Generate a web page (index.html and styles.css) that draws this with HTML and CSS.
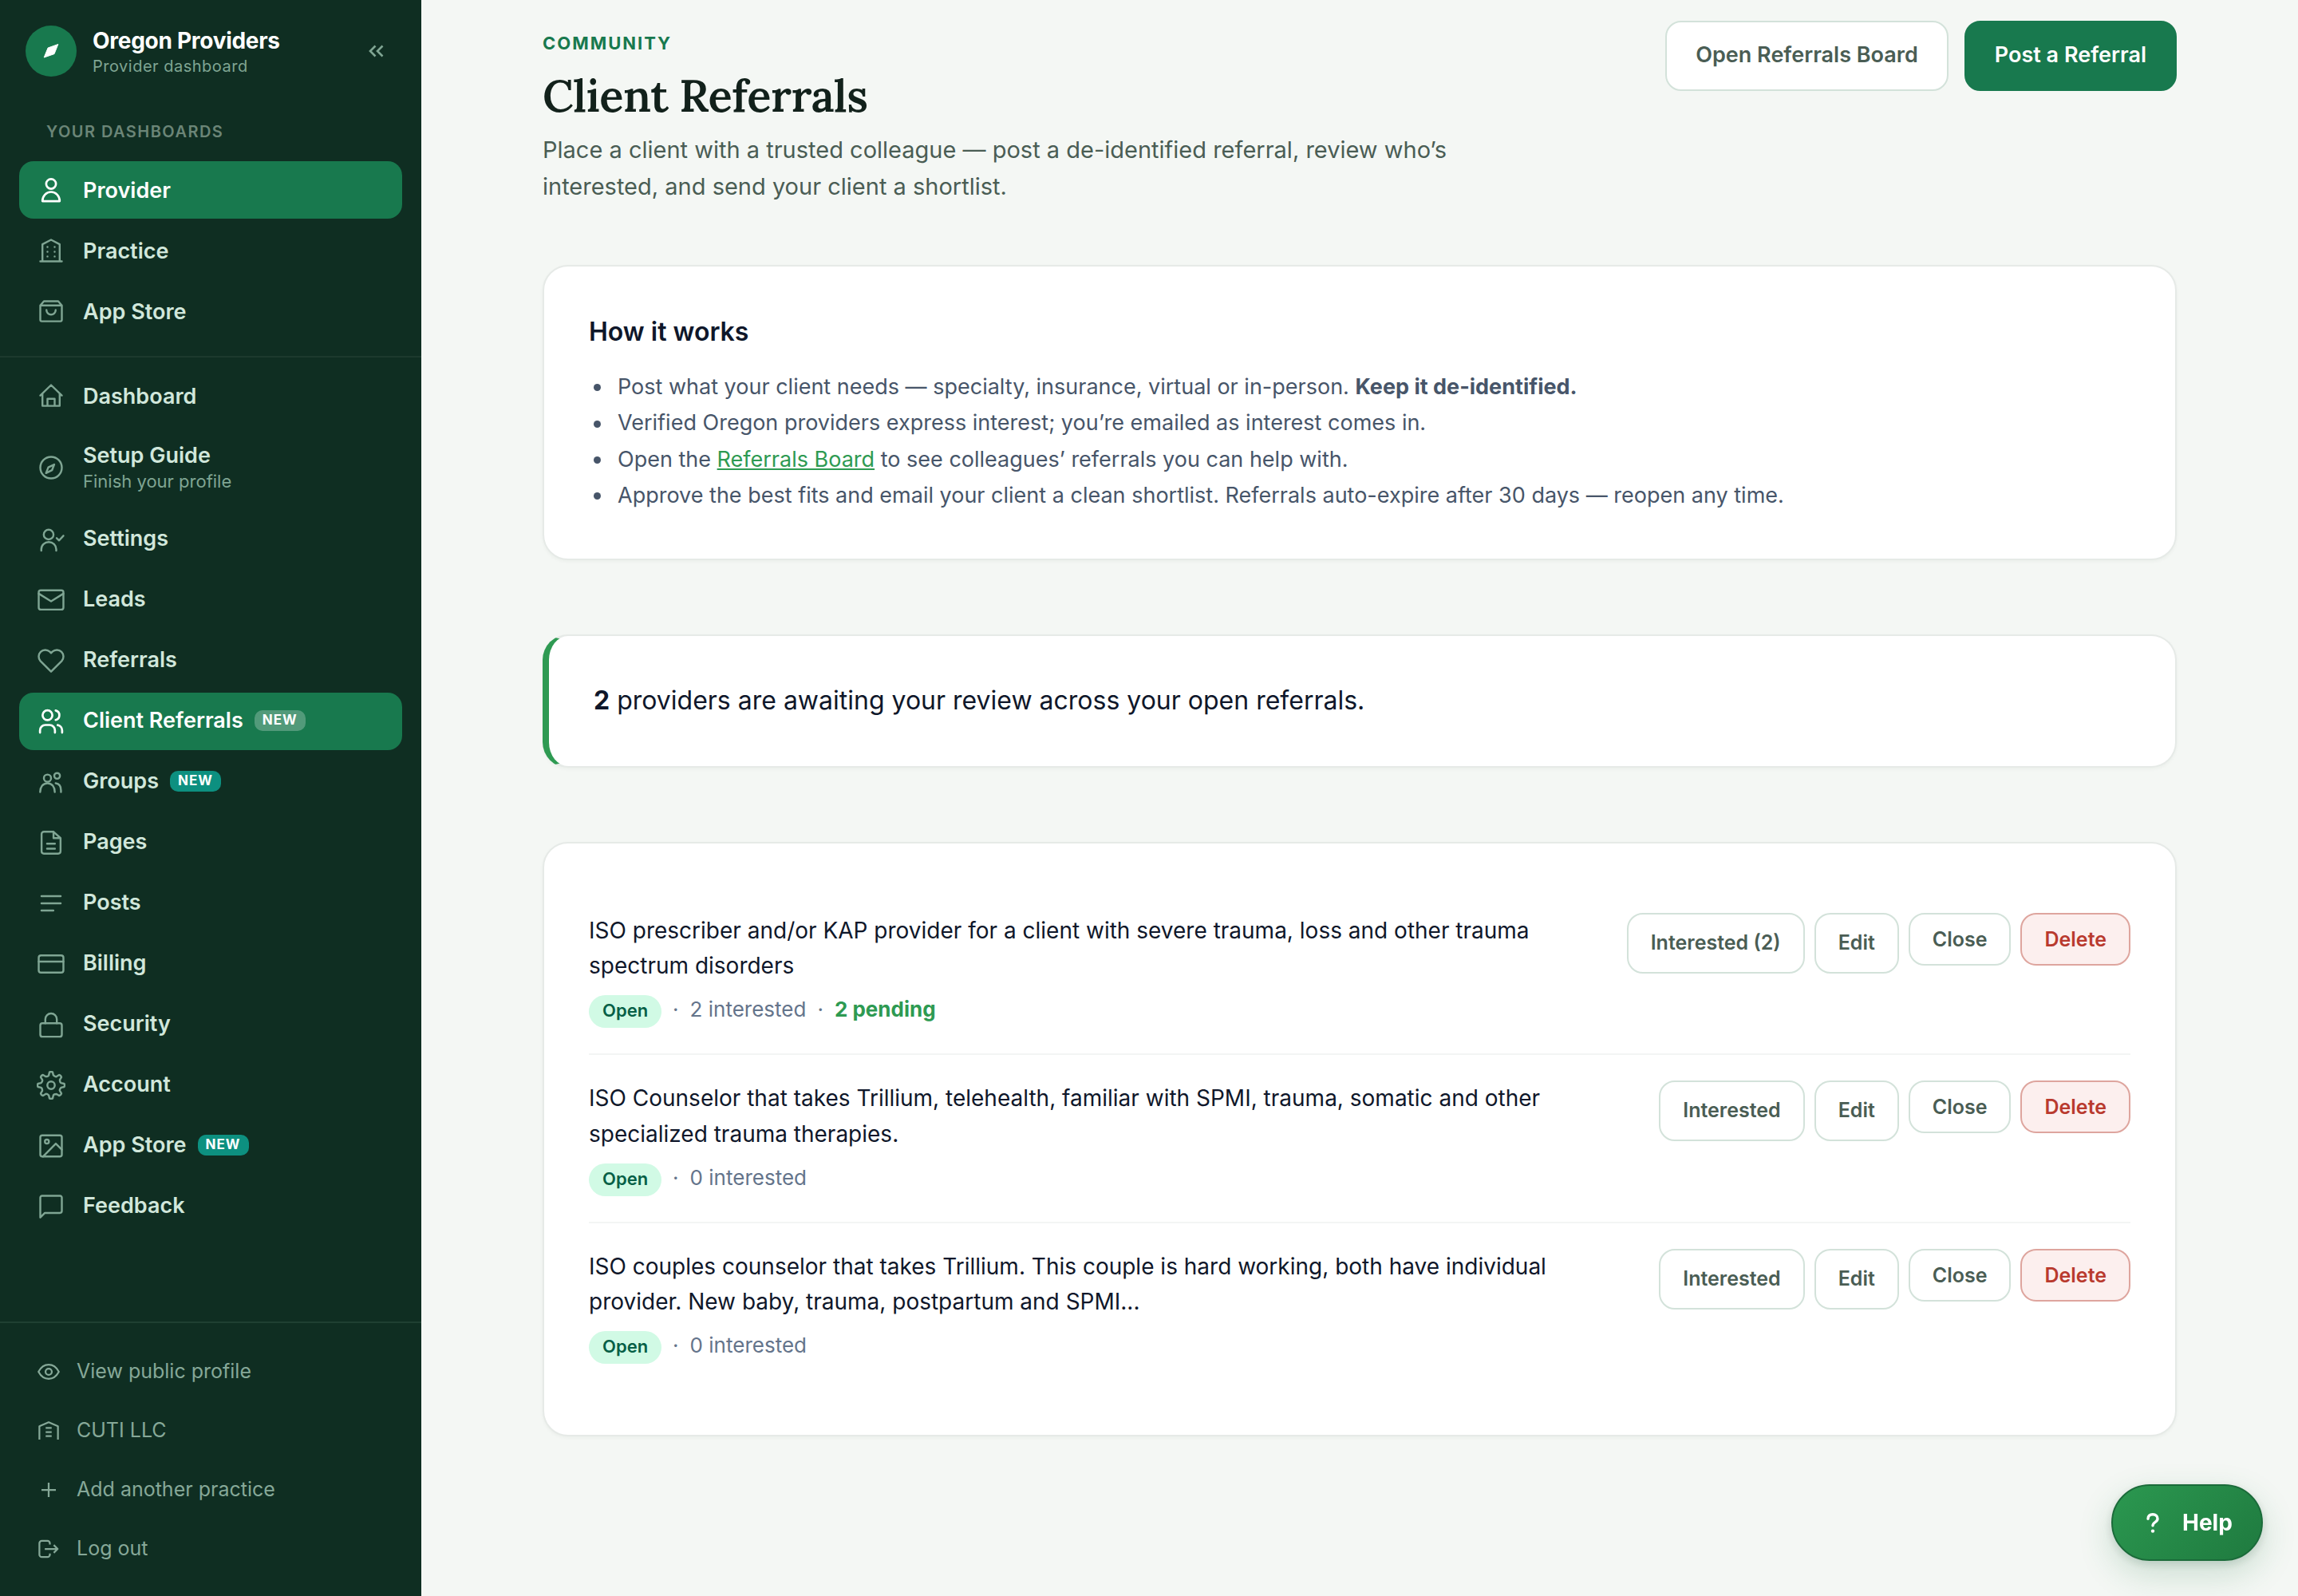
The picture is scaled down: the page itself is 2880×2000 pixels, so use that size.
FILE: index.html
```
<!DOCTYPE html>
<html lang="en">
<head>
    <meta charset="UTF-8">
    <title>Client Referrals - Oregon Providers</title>
    <link rel="stylesheet" href="styles.css">
</head>

<body>
    <aside class="sidebar">
        <div class="brand">
            <div class="brand-mark">
                <svg viewBox="0 0 64 64"><path d="M40.8 23.5L36 35.6 23.2 40l4.9-12z" fill="#fff" stroke="#fff" stroke-linejoin="round"/></svg>
            </div>
            <div class="brand-text">
                <div class="brand-name">Oregon Providers</div>
                <div class="brand-sub">Provider dashboard</div>
            </div>
            <svg class="collapse" viewBox="0 0 20 20"><path d="M9.5 3.5L3 10l6.5 6.5M18.5 3.5L12 10l6.5 6.5"/></svg>
        </div>

        <div class="nav-label">Your dashboards</div>
        <nav class="nav nav-top">
            <a class="nav-item active">
                <svg class="icon" viewBox="0 0 20 20"><circle cx="10" cy="5.8" r="3.4"/><path d="M4 17.8c0-3.6 2.7-6.4 6-6.4s6 2.8 6 6.4z"/></svg>
                Provider
            </a>
            <a class="nav-item">
                <svg class="icon" viewBox="0 0 20 20"><path d="M2.5 17.5h15M4 17.5V5.6l6-3.1 6 3.1v11.9M7.5 7.5h.01M12.5 7.5h.01M7.5 10.8h.01M12.5 10.8h.01M7.5 14.1h.01M12.5 14.1h.01"/></svg>
                Practice
            </a>
            <a class="nav-item">
                <svg class="icon" viewBox="0 0 20 20"><path d="M2.5 6L5 3.1h10L17.5 6v10a1 1 0 0 1-1 1h-13a1 1 0 0 1-1-1zM2.5 6h15M6.8 9.2a3.2 3.2 0 0 0 6.4 0"/></svg>
                App Store
            </a>
        </nav>

        <nav class="nav nav-main">
            <a class="nav-item">
                <svg class="icon" viewBox="0 0 20 20"><path d="M2.5 9.8L10 2.5l7.5 7.3M4 8.5V17h12V8.5M7.5 17v-4.9h5V17"/></svg>
                Dashboard
            </a>
            <a class="nav-item tall">
                <svg class="icon" viewBox="0 0 20 20"><circle cx="10" cy="10" r="7.5"/><path d="M12.2 7.8l-1.5 3.9-4.2 2.1 1.6-4z"/></svg>
                <span class="nav-text">Setup Guide<small>Finish your profile</small></span>
            </a>
            <a class="nav-item">
                <svg class="icon" viewBox="0 0 20 20"><circle cx="8.3" cy="6.6" r="3.4"/><path d="M3.2 17.8v-1a5.2 5 0 0 1 10.4 0v1M13.9 9.1l1.7 1.6 3-3.3"/></svg>
                Settings
            </a>
            <a class="nav-item">
                <svg class="icon" viewBox="0 0 20 20"><rect x="1.4" y="3.2" width="17.2" height="13.4" rx="1.4"/><path d="M1.4 5.5l8.6 5.3 8.6-5.3"/></svg>
                Leads
            </a>
            <a class="nav-item">
                <svg class="icon" viewBox="0 0 20 20"><path d="M10 17.6l-7.4-7.4a4.6 4.6 0 0 1 6.5-6.5l.9.9.9-.9a4.6 4.6 0 0 1 6.5 6.5z"/></svg>
                Referrals
            </a>
            <a class="nav-item active">
                <svg class="icon" viewBox="0 0 20 20"><circle cx="7.5" cy="5.7" r="3.4"/><path d="M2.3 17.8v-1.6a3.7 3.7 0 0 1 3.7-3.7h3a3.7 3.7 0 0 1 3.7 3.7v1.6M13.2 2.4a3.4 3.4 0 0 1 0 6.6M14.6 12.6a3.7 3.7 0 0 1 3.1 3.6v1.6"/></svg>
                Client Referrals <span class="new">NEW</span>
            </a>
            <a class="nav-item">
                <svg class="icon" viewBox="0 0 20 20"><circle cx="7.5" cy="7.3" r="2.5"/><circle cx="14.2" cy="5.7" r="2"/><path d="M2.4 17c0-3.6 2-6.2 5.1-6.2s5.1 2.6 5.1 6.2M13.2 10.8c2.3.2 3.7 2.1 3.7 5V17"/></svg>
                Groups <span class="new">NEW</span>
            </a>
            <a class="nav-item">
                <svg class="icon" viewBox="0 0 20 20"><path d="M11.7 2.4H5a1.6 1.6 0 0 0-1.6 1.6v12A1.6 1.6 0 0 0 5 17.6h10a1.6 1.6 0 0 0 1.6-1.6V6.8zM11.7 2.4v4.4h4.9M7.2 10.7h5.5M7.2 14.2h5.5"/></svg>
                Pages
            </a>
            <a class="nav-item">
                <svg class="icon" viewBox="0 0 20 20"><path d="M3.3 5h13.4M3.3 10h13.4M3.3 15h8.3"/></svg>
                Posts
            </a>
            <a class="nav-item">
                <svg class="icon" viewBox="0 0 20 20"><rect x="1.4" y="4" width="17.2" height="12" rx="1.6"/><path d="M1.4 8.3h17.2"/></svg>
                Billing
            </a>
            <a class="nav-item">
                <svg class="icon" viewBox="0 0 20 20"><rect x="2.5" y="9" width="15" height="9.4" rx="1.5"/><path d="M6 9V6.2a4 4 0 0 1 8 0V9"/></svg>
                Security
            </a>
            <a class="nav-item">
                <svg class="icon" viewBox="0 0 20 20"><circle cx="10" cy="10" r="2.6"/><path d="M8.9.9Q10 .2 11.1.9L11.6 3Q12.9 4.3 13.8 3.9L15.6 2.8Q16.8 3 17.2 4.4L16.1 6.2Q16.1 8 17 8.4L19.1 8.9Q19.8 10 19.1 11.1L17 11.6Q15.7 12.9 16.1 13.8L17.2 15.6Q17 16.8 15.6 17.2L13.8 16.1Q12 16.1 11.6 17L11.1 19.1Q10 19.8 8.9 19.1L8.4 17Q7.1 15.7 6.2 16.1L4.4 17.2Q3.2 17 2.8 15.6L3.9 13.8Q3.9 12 3 11.6L.9 11.1Q.2 10 .9 8.9L3 8.4Q4.3 7.1 3.9 6.2L2.8 4.4Q3 3.2 4.4 2.8L6.2 3.9Q8 3.9 8.4 3z"/></svg>
                Account
            </a>
            <a class="nav-item">
                <svg class="icon" viewBox="0 0 20 20"><rect x="2.5" y="2.6" width="15" height="14.8" rx="1.4"/><circle cx="7.1" cy="7" r="1.4"/><path d="M4.4 17.4l8.9-9 4.2 4.2"/></svg>
                App Store <span class="new">NEW</span>
            </a>
            <a class="nav-item">
                <svg class="icon" viewBox="0 0 20 20"><path d="M2.5 17.6V3.8a1.3 1.3 0 0 1 1.3-1.3h12.4a1.3 1.3 0 0 1 1.3 1.3v9.3a1.3 1.3 0 0 1-1.3 1.3H5.7z"/></svg>
                Feedback
            </a>
        </nav>

        <div class="sidebar-footer">
            <a class="foot-item">
                <svg class="icon" viewBox="0 0 16 16"><path d="M1.2 8C2.8 5 5.2 3.3 8 3.3S13.2 5 14.8 8c-1.6 3-4 4.7-6.8 4.7S2.8 11 1.2 8z"/><circle cx="8" cy="8" r="2.1"/></svg>
                View public profile
            </a>
            <a class="foot-item">
                <svg class="icon" viewBox="0 0 16 16"><path d="M1.8 13.9V4.9L8 2.3l6.2 2.6v9M6 6.1h4M6 8.8h4M6 11.5h4"/></svg>
                CUTI LLC
            </a>
            <a class="foot-item">
                <svg class="icon" viewBox="0 0 16 16"><path d="M8 3.2v9.6M3.2 8h9.6"/></svg>
                Add another practice
            </a>
            <a class="foot-item">
                <svg class="icon" viewBox="0 0 16 16"><path d="M8.8 5V4.2a1.6 1.6 0 0 0-1.6-1.6H3.4a1.6 1.6 0 0 0-1.6 1.6v7.6a1.6 1.6 0 0 0 1.6 1.6h3.8a1.6 1.6 0 0 0 1.6-1.6V11M5.4 8h8.6M11.4 5.4L14 8l-2.6 2.6"/></svg>
                Log out
            </a>
        </div>
    </aside>

    <main class="main">
        <header class="page-header">
            <div class="page-title">
                <div class="eyebrow">Community</div>
                <h1>Client Referrals</h1>
                <p>Place a client with a trusted colleague — post a de-identified referral, review who’s interested, and send your client a shortlist.</p>
            </div>
            <div class="header-actions">
                <a class="btn">Open Referrals Board</a>
                <a class="btn btn-primary">Post a Referral</a>
            </div>
        </header>

        <section class="card how">
            <h2>How it works</h2>
            <ul>
                <li>Post what your client needs — specialty, insurance, virtual or in-person. <strong>Keep it de-identified.</strong></li>
                <li>Verified Oregon providers express interest; you’re emailed as interest comes in.</li>
                <li>Open the <a>Referrals Board</a> to see colleagues’ referrals you can help with.</li>
                <li>Approve the best fits and email your client a clean shortlist. Referrals auto-expire after 30 days — reopen any time.</li>
            </ul>
        </section>

        <section class="card notice">
            <strong>2</strong> providers are awaiting your review across your open referrals.
        </section>

        <section class="card referrals">
            <div class="referral">
                <div class="referral-body">
                    <div class="referral-title">ISO prescriber and/or KAP provider for a client with severe trauma, loss and other trauma spectrum disorders</div>
                    <div class="meta"><span class="pill">Open</span><span>·</span><span>2 interested</span><span>·</span><strong>2 pending</strong></div>
                </div>
                <div class="actions">
                    <a class="btn btn-sm">Interested (2)</a>
                    <a class="btn btn-sm">Edit</a>
                    <button class="btn btn-sm">Close</button>
                    <button class="btn btn-sm btn-danger">Delete</button>
                </div>
            </div>
            <div class="referral">
                <div class="referral-body">
                    <div class="referral-title">ISO Counselor that takes Trillium, telehealth, familiar with SPMI, trauma, somatic and other specialized trauma therapies.</div>
                    <div class="meta"><span class="pill">Open</span><span>·</span><span>0 interested</span></div>
                </div>
                <div class="actions">
                    <a class="btn btn-sm">Interested</a>
                    <a class="btn btn-sm">Edit</a>
                    <button class="btn btn-sm">Close</button>
                    <button class="btn btn-sm btn-danger">Delete</button>
                </div>
            </div>
            <div class="referral">
                <div class="referral-body">
                    <div class="referral-title">ISO couples counselor that takes Trillium. This couple is hard working, both have individual provider. New baby, trauma, postpartum and SPMI...</div>
                    <div class="meta"><span class="pill">Open</span><span>·</span><span>0 interested</span></div>
                </div>
                <div class="actions">
                    <a class="btn btn-sm">Interested</a>
                    <a class="btn btn-sm">Edit</a>
                    <button class="btn btn-sm">Close</button>
                    <button class="btn btn-sm btn-danger">Delete</button>
                </div>
            </div>
        </section>
    </main>

    <button class="help">
        <svg viewBox="0 0 20 28"><path d="M4 9.2C4 5.6 6.4 3.8 10 3.8s6 2.2 6 5.4c0 4.2-6 4.4-6 8.6"/><circle cx="10" cy="24.6" r="2.2"/></svg>
        Help
    </button>
</body>
</html>
```
FILE: styles.css
```
* {
    box-sizing: border-box;
}

body {
    margin: 0;
    display: flex;
    height: 2000px;
    overflow: hidden;
    background: #f4f7f4;
    color: #0f172a;
    font-family: Inter, sans-serif;
    font-size: 28px;
}

h1, h2, p, ul {
    margin: 0;
}

/* Sidebar */
.sidebar {
    display: flex;
    flex-direction: column;
    flex: none;
    width: 528px;
    background: #0f2e22;
    color: #d1e7db;
}

.icon {
    flex: none;
    fill: none;
    stroke: #7fa593;
    stroke-width: 1.35;
    stroke-linecap: round;
    stroke-linejoin: round;
}

.brand {
    display: flex;
    align-items: center;
    gap: 20px;
    padding: 32px 47px 0 32px;
    height: 96px;
}

.brand-mark {
    width: 64px;
    height: 64px;
    border-radius: 50%;
    background: #18794e;
}

.brand-mark svg {
    display: block;
}

.brand-text {
    flex: 1;
    padding-top: 4px;
}

.brand-name {
    color: #fff;
    font-size: 28px;
    font-weight: 700;
    letter-spacing: -0.01em;
    line-height: 34px;
}

.brand-sub {
    color: #7fa593;
    font-size: 20px;
    letter-spacing: 0.025em;
    line-height: 30px;
}

.collapse {
    width: 20px;
    height: 20px;
    fill: none;
    stroke: #7fa593;
    stroke-width: 2.6;
}

.nav-label {
    padding: 54px 58px 0;
    color: #6b8577;
    font-size: 20px;
    font-weight: 600;
    letter-spacing: 0.073em;
    line-height: 30px;
    text-transform: uppercase;
}

.nav {
    display: flex;
    flex-direction: column;
    gap: 4px;
    padding: 0 24px;
}

.nav-top {
    padding-top: 22px;
    padding-bottom: 20px;
    border-bottom: 2px solid #1c392d;
}

.nav-main {
    padding-top: 12px;
}

.nav-item {
    display: flex;
    align-items: center;
    height: 72px;
    padding: 0 22px;
    border-radius: 18px;
    font-size: 27px;
    font-weight: 600;
}

.nav-item .icon {
    width: 36px;
    height: 36px;
    margin-right: 22px;
}

.nav-item.tall {
    height: 100px;
}

.nav-item.tall ~ .nav-item {
    padding-bottom: 3px;
}

.nav-item.tall ~ .nav-item .icon {
    margin-top: 3px;
}

.nav-item.active {
    background: #18794e;
    color: #fff;
}

.nav-item.active .icon {
    stroke: #fff;
    stroke-width: 1.5;
}

.nav-text {
    padding-top: 1px;
    line-height: 32px;
}

.nav-text small {
    display: block;
    color: #7fa593;
    font-size: 22px;
    font-weight: 400;
}

.new {
    height: 26px;
    margin-left: 14px;
    padding: 0 10px;
    border-radius: 10px;
    background: #0d9080;
    color: #fff;
    font-size: 17px;
    font-weight: 700;
    letter-spacing: 0.06em;
    line-height: 24px;
}

.active .new {
    background: rgba(255, 255, 255, 0.25);
}

.sidebar-footer {
    display: flex;
    flex-direction: column;
    gap: 4px;
    margin-top: auto;
    padding: 26px 24px 24px;
    border-top: 2px solid #1f4032;
}

.foot-item {
    display: flex;
    align-items: center;
    gap: 20px;
    height: 70px;
    padding: 0 22px 3px;
    color: #86a898;
    font-size: 25px;
}

.foot-item .icon {
    width: 30px;
    height: 30px;
    margin-top: 3px;
    stroke: #86a898;
    stroke-width: 1.2;
    stroke-linecap: butt;
}

/* Main column */
.main {
    width: 2048px;
    margin-left: 152px;
    padding-top: 26px;
}

.page-header {
    display: flex;
    justify-content: space-between;
    align-items: flex-start;
    height: 306px;
}

.page-title {
    padding-top: 10px;
}

.eyebrow {
    color: #18794e;
    font-size: 22px;
    font-weight: 700;
    letter-spacing: 0.09em;
    line-height: 36px;
    text-transform: uppercase;
}

h1 {
    margin: 16px 0 13px;
    color: #12211b;
    font-family: Lora, "Liberation Serif", serif;
    font-size: 56px;
    font-weight: 600;
    letter-spacing: -0.01em;
    line-height: 64px;
}

.page-title p {
    max-width: 1200px;
    color: #4a5d54;
    font-size: 29px;
    line-height: 1.6;
}

.header-actions {
    display: flex;
    gap: 20px;
}

.btn {
    height: 88px;
    padding: 0 36px;
    border: 2px solid #d3e2da;
    border-radius: 20px;
    background: #fff;
    color: #4a5d54;
    font-family: inherit;
    font-size: 27px;
    font-weight: 600;
    line-height: 82px;
    white-space: nowrap;
}

.btn-primary {
    border-color: #18794e;
    background: #18794e;
    color: #fff;
}

.card {
    margin-bottom: 93px;
    padding: 56px;
    border: 2px solid #e6eae7;
    border-radius: 32px;
    background: #fff;
    box-shadow: 0 2px 4px rgba(15, 46, 34, 0.04);
}

.how h2 {
    margin-bottom: 21px;
    font-size: 32px;
    font-weight: 600;
    line-height: 51px;
}

.how ul {
    padding-left: 36px;
    color: #475569;
    font-size: 27px;
    line-height: 45.4px;
    list-style: none;
}

.how li::before {
    content: "";
    display: inline-block;
    width: 9px;
    height: 9px;
    margin: 0 21px 2px -30px;
    border-radius: 50%;
    background: #475569;
    vertical-align: middle;
}

.how a {
    color: #2e9a52;
    text-decoration: underline;
}

.notice {
    padding: 55px 56px 57px;
    border-left: 8px solid #2e9a52;
    font-size: 32px;
    line-height: 51px;
}

.referrals {
    padding-top: 55px;
}

.referral {
    display: flex;
    justify-content: space-between;
    align-items: flex-start;
    height: 210.5px;
    padding: 32px 0;
    border-bottom: 2px solid #f3f5f4;
}

.referral:last-child {
    height: 209px;
    border-bottom: 0;
}

.referral-body {
    width: 1230px;
}

.referral-title {
    line-height: 1.6;
}

.meta {
    display: flex;
    align-items: baseline;
    gap: 14px;
    margin-top: 11px;
    color: #64748b;
    font-size: 26px;
    line-height: 42px;
}

.meta strong {
    color: #2e9a52;
}

.pill {
    padding: 2px 17px 4px;
    border-radius: 21px;
    background: #d1fae5;
    color: #065f46;
    font-size: 22px;
    font-weight: 600;
    line-height: 35px;
}

.actions {
    display: flex;
    align-items: flex-start;
    gap: 12px;
}

.btn-sm {
    height: 76px;
    padding: 0 28px;
    font-size: 25px;
    line-height: 70px;
}

button.btn-sm {
    height: 66px;
    line-height: 60px;
}

.btn-danger {
    border-color: #dea59e;
    background: #fcefee;
    color: #b93a2e;
}

/* Floating help button */
.help {
    position: fixed;
    right: 44px;
    bottom: 44px;
    display: flex;
    align-items: center;
    gap: 24px;
    width: 190px;
    height: 96px;
    padding: 0 0 0 37px;
    border: 2px solid #1b6b3a;
    border-radius: 48px;
    background: linear-gradient(135deg, #2b9850, #1f7a3f);
    box-shadow: 0 16px 44px rgba(31, 122, 63, 0.2), 0 4px 12px rgba(15, 46, 34, 0.14);
    color: #fff;
    font-family: inherit;
    font-size: 28px;
    font-weight: 700;
}

.help svg {
    width: 26px;
    height: 28px;
    fill: #fff;
}

.help path {
    fill: none;
    stroke: #fff;
    stroke-width: 3.4;
    stroke-linecap: round;
}
```
